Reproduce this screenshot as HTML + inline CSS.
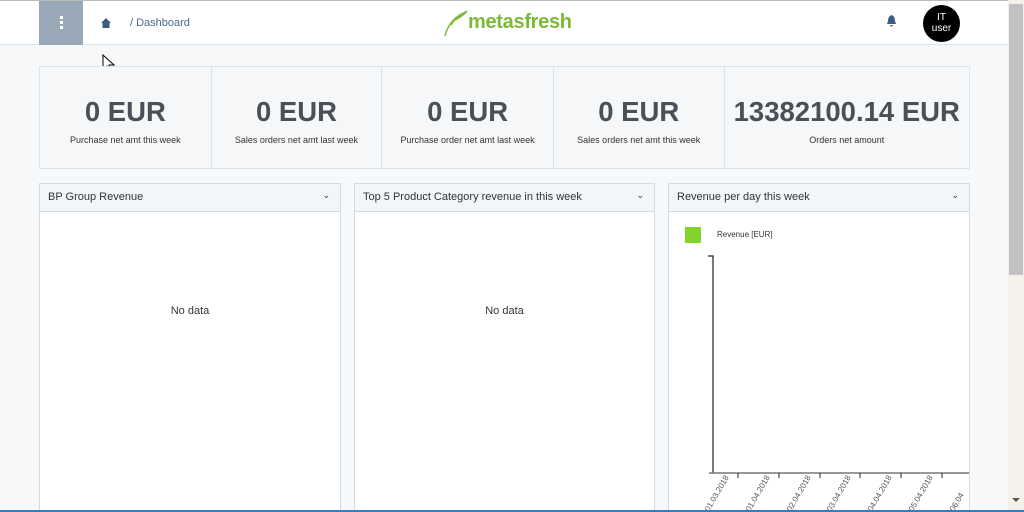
<!DOCTYPE html><html style="overflow:hidden;height:512px"><head><style>
body{margin:0;width:1024px;height:512px;overflow:hidden;background:#f7f8fa;font-family:"Liberation Sans",sans-serif;position:relative}
.hdr{position:absolute;left:0;top:0;width:1008px;height:45px;background:#fff;border-bottom:1px solid #d9e6f0;border-top:1px solid #bbb;box-sizing:border-box}
.menu{position:absolute;left:39px;top:0;width:44px;height:44px;background:#9aa9b7}
.dot{position:absolute;left:21px;width:3px;height:3px;background:#fff}
.crumb{position:absolute;left:130px;top:16px;font-size:11px;color:#476c8e}
.logo{position:absolute;left:468px;top:10px;font-size:20px;font-weight:bold;color:#7cb937;letter-spacing:-0.3px}
.user{position:absolute;left:923px;top:4px;width:37px;height:37px;border-radius:50%;background:#000;color:#fff;font-size:10px;text-align:center;line-height:11px;padding-top:7px;box-sizing:border-box}
.cards{position:absolute;left:39px;top:66px;width:931px;height:103px;border:1px solid #dde3ea;box-sizing:border-box;background:#f6f7f9;display:flex}
.card{border-right:1px solid #dde3ea;text-align:center;box-sizing:border-box}
.card b{display:block;font-size:27.5px;color:#4a5057;margin-top:29px;height:34px}
.card span{font-size:9px;color:#333}
.panel{position:absolute;top:183px;height:329px;background:#fff;border:1px solid #d2dce6;border-bottom:none;box-sizing:border-box;overflow:hidden}
.ph{height:27px;background:#f3f6f9;border-bottom:1px solid #d2dce6;font-size:11px;color:#333;line-height:26px;padding-left:8px;position:relative}
.ph i{position:absolute;right:10px;top:-2px;font-style:normal;font-size:9px}
.nd{position:absolute;top:121px;width:100%;text-align:center;font-size:11px;color:#333}
.sb{position:absolute;left:1008px;top:0;width:16px;height:512px;background:#f3f1ea}
</style></head><body>
<div class="hdr">
<div class="menu"><div class="dot" style="top:15px"></div><div class="dot" style="top:20px"></div><div class="dot" style="top:25px"></div></div>
<svg style="position:absolute;left:101px;top:17px" width="10" height="10" viewBox="0 0 10 10"><path d="M5 0L0 5H1.5V10H8.5V5H10Z" fill="#3d5d80"/></svg>
<div class="crumb">/ Dashboard</div>
<svg style="position:absolute;left:443px;top:8px" width="26" height="28" viewBox="0 0 26 28"><path d="M2 27C4 18 9 10 20 4M8 16C12 9 18 6 24 2C21 6 16 9 10 12" stroke="#7cb937" stroke-width="1.5" fill="none"/></svg>
<div class="logo">metasfresh</div>
<svg style="position:absolute;left:886px;top:14px" width="11" height="13" viewBox="0 0 11 13"><path d="M5.5 0C3 1 2 3 2 6L1 9H10L9 6C9 3 8 1 5.5 0ZM4 10H7L5.5 12Z" fill="#3d5d80"/></svg>
<div class="user">IT<br>user</div>
</div>
<svg style="position:absolute;left:102px;top:54px" width="14" height="20" viewBox="0 0 14 20"><path d="M1 1V16L5 12L8 19L10 18L7 11H12Z" fill="#fff" stroke="#000"/></svg>
<div class="cards">
<div class="card" style="width:172px"><b>0 EUR</b><span>Purchase net amt this week</span></div>
<div class="card" style="width:171px"><b>0 EUR</b><span>Sales orders net amt last week</span></div>
<div class="card" style="width:172px"><b>0 EUR</b><span>Purchase order net amt last week</span></div>
<div class="card" style="width:171px"><b>0 EUR</b><span>Sales orders net amt this week</span></div>
<div class="card" style="width:245px;border:none"><b>13382100.14 EUR</b><span>Orders net amount</span></div>
</div>
<div class="panel" style="left:39px;width:302px"><div class="ph">BP Group Revenue<i>⌄</i></div><div class="nd">No data</div></div>
<div class="panel" style="left:354px;width:301px"><div class="ph">Top 5 Product Category revenue in this week<i>⌄</i></div><div class="nd">No data</div></div>
<div class="panel" style="left:668px;width:302px"><div class="ph">Revenue per day this week<i>⌄</i></div>
<div style="position:absolute;left:16px;top:43px;width:16px;height:16px;background:#82d42c"></div>
<div style="position:absolute;left:48px;top:46px;font-size:8px;color:#333">Revenue [EUR]</div>
<svg style="position:absolute;left:0;top:60px" width="302" height="290"><path d="M39 12H44V229" stroke="#222" fill="none" stroke-width="1.2"/><path d="M40 229H302" stroke="#777" stroke-width="1.5"/>
<g stroke="#222"><path d="M69 229v5M110 229v5M151 229v5M191 229v5M232 229v5M273 229v5"/></g>
<g font-size="8" fill="#555" font-family="Liberation Sans"><text transform="translate(40 268) rotate(-60)">01.03.2018</text><text transform="translate(81 268) rotate(-60)">01.04.2018</text><text transform="translate(122 268) rotate(-60)">02.04.2018</text><text transform="translate(162 268) rotate(-60)">03.04.2018</text><text transform="translate(203 268) rotate(-60)">04.04.2018</text><text transform="translate(244 268) rotate(-60)">05.04.2018</text><text transform="translate(285 268) rotate(-60)">06.04</text></g></svg>
</div>
<div class="sb"><div style="position:absolute;left:1px;top:4px;width:14px;height:271px;background:#c1c1c1"></div><div style="position:absolute;left:4px;top:498px;border:4px solid transparent;border-top:4px solid #555"></div></div>
<div style="position:absolute;left:0;top:510px;width:1024px;height:2px;background:#2f7ecb"></div>
</body></html>
